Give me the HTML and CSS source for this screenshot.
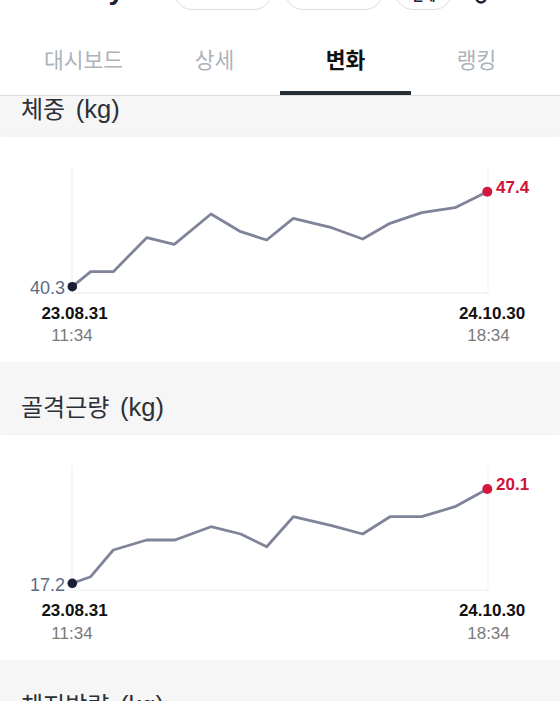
FILE: index.html
```html
<!DOCTYPE html>
<html lang="ko">
<head>
<meta charset="utf-8">
<title>변화</title>
<link rel="stylesheet" href="styles.css">
</head>
<body>
<div class="app">
  <header class="topbar">
    <span class="brand">InBody</span>
    <div class="pill pill-wide"></div>
    <div class="pill pill-wide pill-second"></div>
    <div class="pill pill-small"><span class="pill-label">전체</span></div>
    <svg class="top-icon" width="14" height="14" viewBox="0 0 14 14"><circle cx="7" cy="8" r="4.5" fill="none" stroke="#1d2030" stroke-width="2.6"/></svg>
  </header>
  <nav class="tabs">
    <div class="tab">대시보드</div>
    <div class="tab">상세</div>
    <div class="tab active">변화</div>
    <div class="tab">랭킹</div>
  </nav>
  <main>
    <section class="metric metric-first">
      <h2 class="metric-title">체중 <span class="unit">(kg)</span></h2>
      <div class="card">
        <svg class="chart" width="560" height="225" viewBox="0 0 560 225">
          <line class="grid" x1="72" y1="31" x2="72" y2="156"/>
          <line class="grid grid-faint" x1="488" y1="31" x2="488" y2="156"/>
          <line class="grid" x1="72" y1="156" x2="488" y2="156"/>
          <polyline class="series" points="72.3,149.7 90.7,134.7 113.3,134.7 146.7,100.7 174.3,107.3 211,77 240.7,94.7 266.7,103 293.3,81.3 331.7,90.7 362.7,102 390,86.3 421.7,75.7 455,70.7 487.3,54.7"/>
          <circle class="dot-start" cx="72.3" cy="149.7" r="4.8"/>
          <circle class="dot-end" cx="487.3" cy="54.7" r="5"/>
          <text class="val-start" x="65" y="157">40.3</text>
          <text class="val-end" x="496" y="55.5">47.4</text>
          <text class="date" x="74.5" y="182">23.08.31</text>
          <text class="time" x="72" y="204">11:34</text>
          <text class="date" x="492" y="182">24.10.30</text>
          <text class="time" x="488.5" y="204">18:34</text>
        </svg>
      </div>
    </section>
    <section class="metric">
      <h2 class="metric-title">골격근량 <span class="unit">(kg)</span></h2>
      <div class="card">
        <svg class="chart" width="560" height="225" viewBox="0 0 560 225">
          <line class="grid" x1="72" y1="30" x2="72" y2="155"/>
          <line class="grid grid-faint" x1="488" y1="30" x2="488" y2="155"/>
          <line class="grid" x1="72" y1="155" x2="488" y2="155"/>
          <polyline class="series" points="72.3,148.3 90.7,141.7 113.3,115 146.7,105 175,105 211,91.7 240.7,99 266.7,111.7 293.3,81.7 331.7,90.7 362.7,99 390,81.7 421.7,81.7 455,71.7 487.3,54"/>
          <circle class="dot-start" cx="72.3" cy="148.3" r="4.8"/>
          <circle class="dot-end" cx="487.3" cy="54" r="5"/>
          <text class="val-start" x="65" y="155.5">17.2</text>
          <text class="val-end" x="496" y="55">20.1</text>
          <text class="date" x="74.5" y="181">23.08.31</text>
          <text class="time" x="72" y="203.5">11:34</text>
          <text class="date" x="492" y="181">24.10.30</text>
          <text class="time" x="488.5" y="203.5">18:34</text>
        </svg>
      </div>
    </section>
    <section class="metric">
      <h2 class="metric-title">체지방량 <span class="unit">(kg)</span></h2>
      <div class="card card-empty"></div>
    </section>
  </main>
</div>
</body>
</html>
```
FILE: styles.css
```css
html, body {
  margin: 0;
  padding: 0;
  background: #ffffff;
}

body {
  font-family: "Liberation Sans", "Noto Sans CJK KR", sans-serif;
  color: #222;
}

.app {
  width: 560px;
}

/* top bar (scrolled, only the bottom edge shows) */
.topbar {
  height: 10px;
  overflow: hidden;
  display: flex;
  align-items: flex-end;
  background: #fff;
}

.brand {
  width: 124px;
  flex: none;
  text-align: right;
  font-size: 28px;
  line-height: 28px;
  font-weight: 700;
  color: #1d2030;
  margin-bottom: 6px;
}

.pill {
  flex: none;
  height: 36px;
  box-sizing: border-box;
  border: 1px solid #dcdcdf;
  border-radius: 18px;
  background: #fff;
}

.pill-wide {
  width: 98px;
  margin-left: 50px;
}

.pill-second {
  margin-left: 13px;
}

.pill-small {
  width: 57px;
  margin-left: 12px;
  display: flex;
  align-items: flex-end;
  justify-content: center;
  padding-bottom: 8px;
}

.pill-label {
  font-size: 13px;
  line-height: 13px;
  font-weight: 700;
  color: #1d2030;
  font-family: "Noto Sans CJK KR", sans-serif;
}

.top-icon {
  flex: none;
  margin-left: 22px;
  margin-bottom: 6px;
}

/* tabs */
.tabs {
  display: flex;
  padding: 0 18px;
  border-bottom: 1px solid #dddddd;
  background: #fff;
}

.tab {
  flex: 1;
  height: 85px;
  box-sizing: border-box;
  padding-top: 15px;
  border-bottom: 4px solid transparent;
  display: flex;
  align-items: center;
  justify-content: center;
  font-family: "Noto Sans CJK KR", sans-serif;
  font-size: 21.5px;
  color: #adb3ba;
}

.tab.active {
  color: #111;
  font-weight: 700;
  border-bottom-color: #263036;
}

/* metrics */
.metric {
  background: #f6f6f6;
}

.metric-title {
  margin: 0;
  padding: 32px 21px 13px;
  height: 28px;
  font-size: 24px;
  line-height: 28px;
  font-weight: 400;
  color: #2b2f36;
  word-spacing: 4px;
  white-space: nowrap;
}

.unit {
  font-size: 25.5px;
  line-height: 20px;
}

.metric-first .metric-title {
  padding-top: 0;
}

.card {
  background: #fff;
  height: 225px;
  box-shadow: 0 3px 8px rgba(0, 0, 0, 0.05);
}

.chart {
  display: block;
}

.grid {
  stroke: #ebebeb;
  stroke-width: 1;
}

.grid-faint {
  stroke: #f3f3f3;
}

.series {
  fill: none;
  stroke: #7f8499;
  stroke-width: 2.8;
  stroke-linejoin: round;
  stroke-linecap: round;
}

.dot-start {
  fill: #1b1f33;
}

.dot-end {
  fill: #d3173f;
}

.val-start {
  font-family: "Liberation Sans", sans-serif;
  font-size: 18px;
  fill: #5b6b86;
  text-anchor: end;
}

.val-end {
  font-family: "Liberation Sans", sans-serif;
  font-size: 17px;
  font-weight: 700;
  fill: #cf1239;
}

.date {
  font-family: "Liberation Sans", sans-serif;
  font-size: 17px;
  font-weight: 700;
  fill: #111;
  text-anchor: middle;
}

.time {
  font-family: "Liberation Sans", sans-serif;
  font-size: 17px;
  fill: #7a7a7a;
  text-anchor: middle;
}
```
